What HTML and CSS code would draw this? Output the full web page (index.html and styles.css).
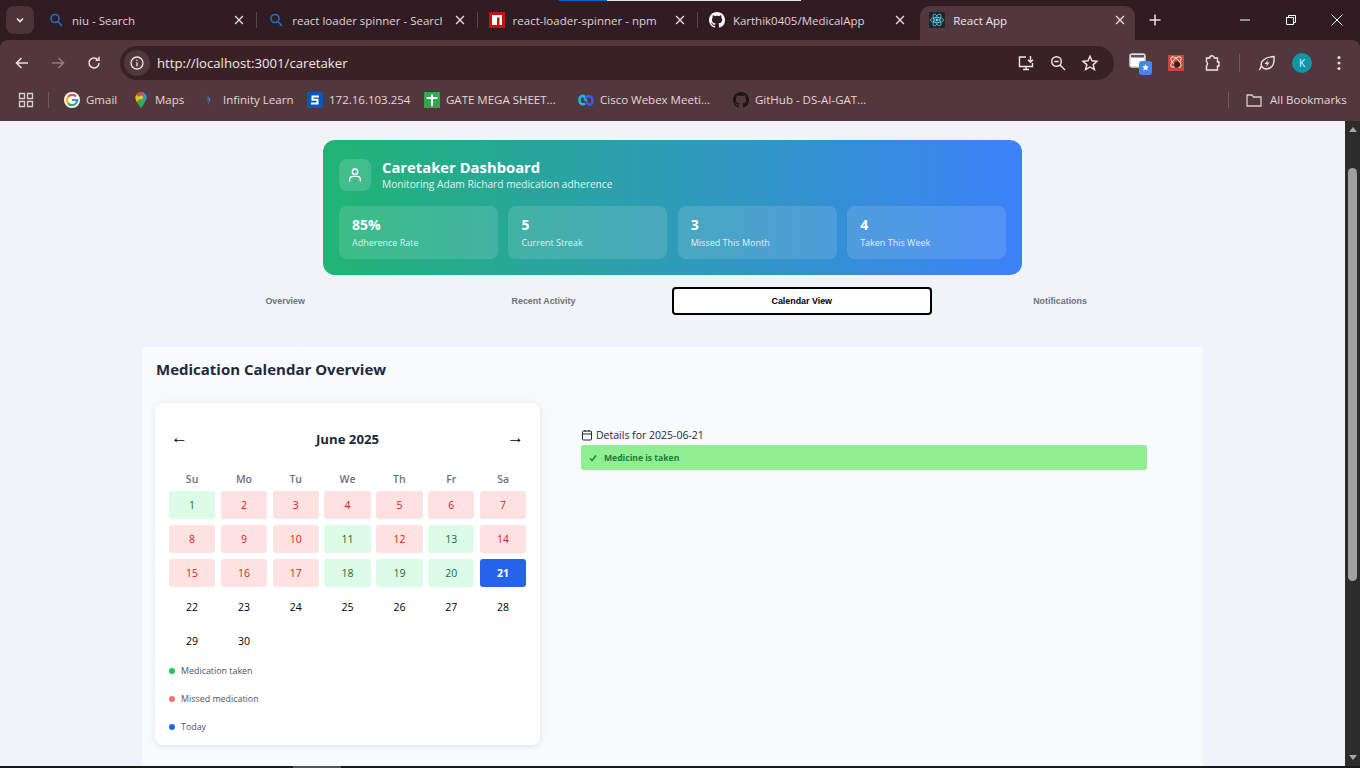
FILE: index.html
```html
<!DOCTYPE html>
<html lang="en">
<head>
    <meta charset="UTF-8">
    <meta name="viewport" content="width=device-width, initial-scale=1.0">
    <title>React App</title>
    <link rel="stylesheet" href="styles.css">
</head>
<body>

    <svg class="defs" width="0" height="0">
        <symbol id="i-close" viewBox="0 0 16 16"><path d="M3.5 3.5l9 9M12.5 3.5l-9 9" fill="none" stroke="currentColor" stroke-width="1.5"/></symbol>
        <symbol id="i-search" viewBox="0 0 16 16"><circle cx="7" cy="6.5" r="4" fill="none" stroke="#1a73c8" stroke-width="1.6"/><path d="M10 9.5l4 4.5" stroke="#1a73c8" stroke-width="1.6"/></symbol>
        <symbol id="i-github" viewBox="0 0 16 16"><path fill="currentColor" d="M8 0C3.58 0 0 3.58 0 8c0 3.54 2.29 6.53 5.47 7.59.4.07.55-.17.55-.38 0-.19-.01-.82-.01-1.49-2.01.37-2.53-.49-2.69-.94-.09-.23-.48-.94-.82-1.13-.28-.15-.68-.52-.01-.53.63-.01 1.08.58 1.23.82.72 1.21 1.87.87 2.33.66.07-.52.28-.87.51-1.07-1.78-.2-3.64-.89-3.64-3.95 0-.87.31-1.59.82-2.15-.08-.2-.36-1.02.08-2.12 0 0 .67-.21 2.2.82.64-.18 1.32-.27 2-.27.68 0 1.36.09 2 .27 1.53-1.04 2.2-.82 2.2-.82.44 1.1.16 1.92.08 2.12.51.56.82 1.27.82 2.15 0 3.07-1.87 3.75-3.65 3.95.29.25.54.73.54 1.48 0 1.07-.01 1.93-.01 2.2 0 .21.15.46.55.38A8.013 8.013 0 0016 8c0-4.42-3.58-8-8-8z"/></symbol>
    </svg>

    <!-- Browser chrome -->
    <div class="chrome">
        <div class="tabstrip">
            <div class="tab-menu"><svg width="12" height="12" viewBox="0 0 12 12"><path d="M3 4.5l3 3 3-3" fill="none" stroke="#f2e8ea" stroke-width="1.6"/></svg></div>
            <div class="tab">
                <svg class="favicon"><use href="#i-search"/></svg>
                <span class="tab-title">niu - Search</span>
                <svg class="tab-close"><use href="#i-close"/></svg>
            </div>
            <div class="tab">
                <svg class="favicon"><use href="#i-search"/></svg>
                <span class="tab-title">react loader spinner - Search</span>
                <svg class="tab-close"><use href="#i-close"/></svg>
            </div>
            <div class="tab">
                <svg class="favicon" viewBox="0 0 16 16"><rect width="16" height="16" fill="#c70f14"/><path d="M3 3h10v10h-2.500V5.500H8V13H3z" fill="#fff"/></svg>
                <span class="tab-title">react-loader-spinner - npm</span>
                <svg class="tab-close"><use href="#i-close"/></svg>
            </div>
            <div class="tab tab-last">
                <svg class="favicon favicon-white"><use href="#i-github"/></svg>
                <span class="tab-title">Karthik0405/MedicalApp</span>
                <svg class="tab-close"><use href="#i-close"/></svg>
            </div>
            <div class="tab tab-active">
                <svg class="favicon" viewBox="0 0 16 16">
                    <rect width="16" height="16" rx="1" fill="#20262b"/>
                    <circle cx="8" cy="8" r="1.400" fill="#61dafb"/>
                    <g fill="none" stroke="#61dafb" stroke-width=".7">
                        <ellipse cx="8" cy="8" rx="6.600" ry="2.600"/>
                        <ellipse cx="8" cy="8" rx="6.600" ry="2.600" transform="rotate(60 8 8)"/>
                        <ellipse cx="8" cy="8" rx="6.600" ry="2.600" transform="rotate(120 8 8)"/>
                    </g>
                </svg>
                <span class="tab-title">React App</span>
                <svg class="tab-close"><use href="#i-close"/></svg>
            </div>
            <svg class="new-tab" width="16" height="16" viewBox="0 0 16 16"><path d="M8 2.500v11M2.500 8h11" stroke="#e8dde0" stroke-width="1.600"/></svg>
            <div class="win-buttons">
                <svg width="16" height="16" viewBox="0 0 16 16"><path d="M3 8h10" stroke="#fff" stroke-width="1"/></svg>
                <svg width="16" height="16" viewBox="0 0 16 16"><path d="M3.500 5.500h7v7h-7zM5.500 5.500v-2h7v7h-2" fill="none" stroke="#fff" stroke-width="1"/></svg>
                <svg width="16" height="16" viewBox="0 0 16 16"><path d="M2.500 2.500l11 11M13.500 2.500l-11 11" stroke="#fff" stroke-width="1"/></svg>
            </div>
        </div>

        <div class="toolbar">
            <button class="tool-btn"><svg width="16" height="16" viewBox="0 0 16 16"><path d="M14 8H3M7.500 3L2.500 8l5 5" fill="none" stroke="#e8dde0" stroke-width="1.600"/></svg></button>
            <button class="tool-btn"><svg width="16" height="16" viewBox="0 0 16 16"><path d="M2 8h11M8.500 3l5 5-5 5" fill="none" stroke="#8f7b80" stroke-width="1.600"/></svg></button>
            <button class="tool-btn"><svg width="16" height="16" viewBox="0 0 16 16"><path d="M13 8a5 5 0 1 1-1.500-3.600M13 1.800v3.400H9.600" fill="none" stroke="#e8dde0" stroke-width="1.500"/></svg></button>
            <div class="omnibox">
                <div class="site-info"><svg width="16" height="16" viewBox="0 0 16 16"><circle cx="8" cy="8" r="6" fill="none" stroke="#efe6e8" stroke-width="1.300"/><path d="M8 7.200v4M8 4.700v1.300" stroke="#efe6e8" stroke-width="1.300"/></svg></div>
                <span class="url">http://localhost:3001/caretaker</span>
                <div class="omni-actions">
                    <svg width="18" height="18" viewBox="0 0 18 18"><path d="M9 3H2.500v9.500h13V9M6 15.500h6M9 12.500v3M13.500 2v6M11 5.800l2.500 2.500L16 5.800" fill="none" stroke="#efe6e8" stroke-width="1.400"/></svg>
                    <svg width="18" height="18" viewBox="0 0 18 18"><circle cx="7.500" cy="7.500" r="4.800" fill="none" stroke="#efe6e8" stroke-width="1.400"/><path d="M11 11l5 5M5.300 7.500h4.400" stroke="#efe6e8" stroke-width="1.400"/></svg>
                    <svg width="18" height="18" viewBox="0 0 18 18"><path d="M9 2.200l2 4.600 5 .5-3.800 3.300 1.200 4.900L9 13l-4.400 2.500 1.200-4.900L2 7.300l5-.5z" fill="none" stroke="#efe6e8" stroke-width="1.400"/></svg>
                </div>
            </div>
            <div class="ext-row">
                <div class="ext">
                    <svg width="24" height="24" viewBox="0 0 24 24"><rect x="2" y="3" width="15" height="13" rx="2" fill="#fff" stroke="#d8d8d8" stroke-width="1.500"/><rect x="3" y="4" width="13" height="2.500" fill="#57575b"/><rect x="11" y="10" width="13" height="14" rx="3" fill="#4285f4"/><path d="M17.500 13l1 2.300 2.400.2-1.800 1.600.6 2.400-2.200-1.300-2.200 1.300.6-2.400-1.800-1.600 2.400-.2z" fill="#fff"/></svg>
                </div>
                <div class="ext">
                    <svg width="18" height="18" viewBox="0 0 18 18"><rect x="1" y="1" width="16" height="16" fill="#c9473a"/><g fill="none" stroke="#f5ddd8" stroke-width="1"><ellipse cx="9" cy="8" rx="6.500" ry="2.800" transform="rotate(45 9 8)"/><ellipse cx="9" cy="8" rx="6.500" ry="2.800" transform="rotate(135 9 8)"/></g><circle cx="10" cy="10.500" r="3" fill="#33201f"/></svg>
                </div>
                <div class="ext">
                    <svg width="18" height="18" viewBox="0 0 18 18"><path d="M3.500 4h3.200a2.300 2.300 0 0 1 4.600 0h3.200v4H16v4h-1.500v4H3.500v-4.500a2 2 0 0 0 0-3.500z" fill="none" stroke="#efe6e8" stroke-width="1.400"/></svg>
                </div>
                <div class="tool-sep"></div>
                <div class="ext">
                    <svg width="18" height="18" viewBox="0 0 18 18"><path d="M16 2.500c.5 6-.5 12-7.500 12.500-2 0-4-1-5-3C2 8 6 3 16 2.500zM3.500 12L1.500 16" fill="none" stroke="#efe6e8" stroke-width="1.400"/><path d="M10.500 5.500L6.500 10h2.500l-1 3 3.500-4.500H9z" fill="#efe6e8"/></svg>
                </div>
                <div class="avatar">K</div>
                <svg class="kebab" width="4" height="16" viewBox="0 0 4 16"><circle cx="2" cy="2.500" r="1.500" fill="#e8dde0"/><circle cx="2" cy="8" r="1.500" fill="#e8dde0"/><circle cx="2" cy="13.500" r="1.500" fill="#e8dde0"/></svg>
            </div>
        </div>

        <div class="bookmarks">
            <svg class="apps" width="16" height="16" viewBox="0 0 16 16"><path d="M1.500 1.500h5v5h-5zM9.500 1.500h5v5h-5zM1.500 9.500h5v5h-5zM9.500 9.500h5v5h-5z" fill="none" stroke="#d8cdd0" stroke-width="1.300"/></svg>
            <div class="bm-sep"></div>
            <div class="bm-list">
                <div class="bm">
                    <svg class="favicon" viewBox="0 0 16 16"><circle cx="8" cy="8" r="8" fill="#fff"/><g fill="none" stroke-width="2.200"><path d="M12 4.500A5.200 5.200 0 0 0 4 4.800" stroke="#ea4335"/><path d="M4 4.800a5.200 5.200 0 0 0 0 6.400" stroke="#fbbc05"/><path d="M4 11.200a5.200 5.200 0 0 0 8 .2" stroke="#34a853"/><path d="M12 11.400A5.200 5.200 0 0 0 13.200 8H8" stroke="#4285f4"/></g></svg>
                    <span>Gmail</span>
                </div>
                <div class="bm">
                    <svg class="favicon" viewBox="0 0 16 16"><path d="M8 0a5.500 5.500 0 0 0-5.500 5.500C2.500 9.500 8 16 8 16s5.500-6.500 5.500-10.500A5.500 5.500 0 0 0 8 0z" fill="#34a853"/><path d="M3.200 3l4 3-3.500 4C3 8.500 2.500 7 2.500 5.500 2.500 4.500 2.700 3.700 3.200 3z" fill="#fbbc05"/><path d="M3.200 3A5.500 5.500 0 0 1 8 0c.8 0 1.500.2 2 .4L7 4.500z" fill="#ea4335"/><path d="M10 .4a5.500 5.500 0 0 1 3.500 5c0 .5 0 .9-.2 1.400L8.500 4z" fill="#4285f4"/><circle cx="8" cy="5.500" r="2" fill="#f6c445"/></svg>
                    <span>Maps</span>
                </div>
                <div class="bm">
                    <svg class="favicon" viewBox="0 0 16 16"><path d="M6 3l3.500 4.500L7 13l1-5z" fill="#3f8fd8"/><path d="M6 6l2 2-1.500 2z" fill="#2c6aa5"/></svg>
                    <span>Infinity Learn</span>
                </div>
                <div class="bm">
                    <svg class="favicon" viewBox="0 0 16 16"><rect width="16" height="16" fill="#0b57b8"/><path d="M12 4.500H5.500v3.200h5v3.800H4" fill="none" stroke="#fff" stroke-width="2"/></svg>
                    <span>172.16.103.254</span>
                </div>
                <div class="bm">
                    <svg class="favicon" viewBox="0 0 16 16"><rect width="16" height="16" rx="1" fill="#2fa84f"/><path d="M2.500 6h11M8 2.500V14" stroke="#fff" stroke-width="2"/></svg>
                    <span>GATE MEGA SHEET...</span>
                </div>
                <div class="bm">
                    <svg class="favicon" viewBox="0 0 16 16"><path d="M7 11.500C5 13 2 12.500 1.500 9 1 5.500 3.500 3 5.500 4c1.500.8 2 3 2.500 5" fill="none" stroke="#18b8e8" stroke-width="2.600"/><path d="M8 7c.5-2 1-3 2.500-3 2 0 4 1.500 4 5s-3 4.500-4.500 3C9 11 8.500 10 8 9" fill="none" stroke="#3c5ae8" stroke-width="2.600"/></svg>
                    <span>Cisco Webex Meeti...</span>
                </div>
                <div class="bm">
                    <svg class="favicon favicon-dark"><use href="#i-github"/></svg>
                    <span>GitHub - DS-AI-GAT...</span>
                </div>
            </div>
            <div class="bm-sep"></div>
            <div class="bm bm-all">
                <svg class="favicon" viewBox="0 0 16 16"><path d="M1 3h5l1.500 2H15v9H1z" fill="none" stroke="#d8cdd0" stroke-width="1.300"/></svg>
                <span>All Bookmarks</span>
            </div>
        </div>
    </div>

    <!-- Page -->
    <div class="viewport">
        <div class="page">

            <div class="hero">
                <div class="hero-head">
                    <div class="hero-icon">
                        <svg width="16" height="16" viewBox="0 0 24 24" fill="none" stroke="#fff" stroke-width="2" stroke-linecap="round"><circle cx="12" cy="7" r="4"/><path d="M4 21v-2a5 5 0 0 1 5-5h6a5 5 0 0 1 5 5v2"/></svg>
                    </div>
                    <div>
                        <h1>Caretaker Dashboard</h1>
                        <p>Monitoring Adam Richard medication adherence</p>
                    </div>
                </div>
                <div class="stats">
                    <div class="stat"><strong>85%</strong><span>Adherence Rate</span></div>
                    <div class="stat"><strong>5</strong><span>Current Streak</span></div>
                    <div class="stat"><strong>3</strong><span>Missed This Month</span></div>
                    <div class="stat"><strong>4</strong><span>Taken This Week</span></div>
                </div>
            </div>

            <div class="tabs">
                <div class="tab-link">Overview</div>
                <div class="tab-link">Recent Activity</div>
                <div class="tab-link selected">Calendar View</div>
                <div class="tab-link">Notifications</div>
            </div>

            <div class="panel">
                <h2>Medication Calendar Overview</h2>
                <div class="panel-body">
                    <div class="calendar">
                        <div class="cal-nav">
                            <span class="cal-arrow">←</span>
                            <span class="cal-month">June 2025</span>
                            <span class="cal-arrow">→</span>
                        </div>
                        <div class="weekdays">
                            <span>Su</span><span>Mo</span><span>Tu</span><span>We</span><span>Th</span><span>Fr</span><span>Sa</span>
                        </div>
                        <div class="days">
                            <div class="day taken">1</div>
                            <div class="day missed">2</div>
                            <div class="day missed">3</div>
                            <div class="day missed">4</div>
                            <div class="day missed">5</div>
                            <div class="day missed">6</div>
                            <div class="day missed">7</div>
                            <div class="day missed">8</div>
                            <div class="day missed">9</div>
                            <div class="day missed">10</div>
                            <div class="day taken">11</div>
                            <div class="day missed">12</div>
                            <div class="day taken">13</div>
                            <div class="day missed">14</div>
                            <div class="day missed">15</div>
                            <div class="day missed">16</div>
                            <div class="day missed">17</div>
                            <div class="day taken">18</div>
                            <div class="day taken">19</div>
                            <div class="day taken">20</div>
                            <div class="day today">21</div>
                            <div class="day">22</div>
                            <div class="day">23</div>
                            <div class="day">24</div>
                            <div class="day">25</div>
                            <div class="day">26</div>
                            <div class="day">27</div>
                            <div class="day">28</div>
                            <div class="day">29</div>
                            <div class="day">30</div>
                        </div>
                        <div class="legend">
                            <div class="legend-item"><i class="dot dot-green"></i>Medication taken</div>
                            <div class="legend-item"><i class="dot dot-red"></i>Missed medication</div>
                            <div class="legend-item"><i class="dot dot-blue"></i>Today</div>
                        </div>
                    </div>

                    <div class="details">
                        <div class="details-title">
                            <svg width="12" height="12" viewBox="0 0 24 24" fill="none" stroke="#1e293b" stroke-width="2"><rect x="3" y="4" width="18" height="18" rx="2"/><path d="M16 2v4M8 2v4M3 10h18"/></svg>
                            Details for 2025-06-21
                        </div>
                        <div class="alert">
                            <svg width="8" height="8" viewBox="0 0 8 8"><path d="M1 4.500l2 2 4-5" fill="none" stroke="#15803d" stroke-width="1.500"/></svg>
                            Medicine is taken
                        </div>
                    </div>
                </div>
            </div>
        </div>

        <div class="scrollbar">
            <div class="sb-up"></div>
            <div class="sb-thumb"></div>
            <div class="sb-down"></div>
        </div>
    </div>

    <div class="taskbar-edge"><div class="taskbar-active"></div></div>

</body>
</html>
```

FILE: styles.css
```css
* {
    box-sizing: border-box;
}

html, body {
    height: 768px;
    margin: 0;
    overflow: hidden;
}

body {
    display: flex;
    flex-direction: column;
    font-family: "Open Sans", "Noto Sans", sans-serif;
    background: #f0f4f8;
}

.defs {
    display: none;
}

/* Browser chrome */
.chrome {
    flex: 0 0 121px;
    background: #301c22;
    color: #e8dde0;
    font-size: 11.500px;
}

.tabstrip {
    display: flex;
    height: 40px;
    padding-left: 6px;
    padding-top: 6px;
    position: relative;
}

.tabstrip::before {
    content: "";
    position: absolute;
    left: 559px;
    top: 0;
    width: 242px;
    height: 1px;
    background: linear-gradient(to right, #0b63c4 20%, #e8e8e8 20%);
}

.tab-menu {
    display: flex;
    align-items: center;
    justify-content: center;
    width: 28px;
    height: 28px;
    border-radius: 8px;
    background: #4b3339;
    margin-right: 3px;
}

.tab {
    display: flex;
    align-items: center;
    width: 220.300px;
    height: 28px;
    padding-left: 11px;
    color: #dfd3d6;
}

.tab::after {
    content: "";
    flex: 0 0 1px;
    height: 16px;
    margin-left: 10px;
    background: #5a454a;
}

.tab-last::after,
.tab-active::after {
    background: none;
}

.tab-active {
    width: 215px;
    height: 34px;
    margin-left: 2px;
    padding-left: 9px;
    padding-bottom: 6px;
    border-radius: 10px 10px 0 0;
    background: #52373c;
    color: #f2e8ea;
}

.tab-active::after {
    margin-left: 0;
    flex-basis: 8px;
}

.favicon {
    flex: 0 0 16px;
    width: 16px;
    height: 16px;
}

.favicon-white {
    color: #fff;
}

.favicon-dark {
    color: #17181a;
}

.tab-title {
    flex: 1;
    margin-left: 8px;
    overflow: hidden;
    white-space: nowrap;
}

.tab-close {
    flex: 0 0 14px;
    width: 14px;
    height: 14px;
    margin-left: 11px;
    color: #e8dde0;
}

.new-tab {
    margin: 6px 0 0 12px;
}

.win-buttons {
    display: flex;
    margin-left: auto;
    padding-right: 15px;
    gap: 30px;
    padding-top: 6px;
}

.toolbar {
    display: flex;
    align-items: center;
    height: 46px;
    padding-left: 4px;
    background: #52373c;
    border-radius: 8px 8px 0 0;
}

.tool-btn {
    display: flex;
    align-items: center;
    justify-content: center;
    width: 36px;
    height: 36px;
    padding: 0;
    border: none;
    background: none;
}

.omnibox {
    display: flex;
    align-items: center;
    width: 994px;
    height: 34px;
    margin-left: 8px;
    padding-left: 4px;
    border-radius: 17px;
    background: #3a2126;
    font-size: 13.200px;
    color: #f2e8ea;
}

.site-info {
    display: flex;
    align-items: center;
    justify-content: center;
    width: 26px;
    height: 26px;
    border-radius: 50%;
    background: #52373c;
}

.url {
    margin-left: 7px;
}

.omni-actions {
    display: flex;
    gap: 14px;
    margin-left: auto;
    padding-right: 15px;
}

.ext-row {
    display: flex;
    align-items: center;
    margin-left: 8px;
}

.ext {
    display: flex;
    align-items: center;
    justify-content: center;
    width: 36px;
    height: 36px;
}

.tool-sep {
    width: 1px;
    height: 18px;
    margin: 0 9px;
    background: #6f5a5f;
}

.avatar {
    display: flex;
    align-items: center;
    justify-content: center;
    width: 20px;
    height: 20px;
    margin-left: 7px;
    border-radius: 50%;
    background: #0e96a8;
    color: #f2f2f2;
    font-size: 10px;
}

.kebab {
    margin-left: 25px;
}

.bookmarks {
    display: flex;
    align-items: center;
    height: 35px;
    padding: 0 0 8px 18px;
    background: #52373c;
}

.bm-sep {
    width: 1px;
    height: 16px;
    margin-left: 14px;
    background: #6f5a5f;
}

.bm-list {
    display: grid;
    grid-template-columns: 69px 68px 106px 117px 154px 155px 481px;
    margin-left: 15px;
}

.bm {
    display: flex;
    align-items: center;
    gap: 6px;
    white-space: nowrap;
    color: #e3d8da;
}

.bm-all {
    margin-left: 17px;
    gap: 8px;
}

/* Page */
.viewport {
    flex: 1;
    display: flex;
    min-height: 0;
}

.page {
    flex: 1;
    overflow: hidden;
    padding-top: 19px;
}

.hero {
    width: 699px;
    height: 135px;
    margin: 0 auto;
    padding: 18px 16px;
    border-radius: 12px;
    background: linear-gradient(to right, #20b573, #3b82f9);
    color: #fff;
}

.hero-head {
    display: flex;
    align-items: center;
    gap: 11px;
}

.hero-icon {
    display: flex;
    align-items: center;
    justify-content: center;
    width: 32px;
    height: 32px;
    border-radius: 8px;
    background: rgba(255, 255, 255, 0.15);
}

.hero h1 {
    margin: -1px 0 0;
    font-size: 14.800px;
    line-height: 20px;
    font-weight: 700;
}

.hero p {
    margin: 0;
    font-size: 10.200px;
    line-height: 14px;
    color: #e3f5ee;
}

.stats {
    display: grid;
    grid-template-columns: repeat(4, 1fr);
    gap: 10.500px;
    margin-top: 15px;
}

.stat {
    display: flex;
    flex-direction: column;
    height: 53px;
    padding: 10px 13px;
    border-radius: 8px;
    background: rgba(255, 255, 255, 0.13);
}

.stat strong {
    font-size: 14px;
    line-height: 18px;
}

.stat span {
    margin-top: 2px;
    font-size: 9px;
    line-height: 13px;
    color: #e3f0f2;
}

.tabs {
    display: grid;
    grid-template-columns: repeat(4, 258.300px);
    width: 1033px;
    margin: 12px auto 0;
}

.tab-link {
    height: 28px;
    line-height: 28px;
    text-align: center;
    font-family: "Liberation Sans", sans-serif;
    font-size: 8.900px;
    font-weight: 700;
    color: #6b7280;
}

.tab-link.selected {
    line-height: 24px;
    margin: 0 -1px;
    border: 2px solid #000;
    border-radius: 4px;
    background: #fff;
    color: #000;
}

.panel {
    width: 1061px;
    height: 500px;
    margin: 32px auto 0;
    padding: 12px 13px;
    background: #f8fafc;
}

.panel h2 {
    margin: 0 0 0 1px;
    font-size: 15px;
    line-height: 20px;
    font-weight: 700;
    color: #1e293b;
}

.panel-body {
    display: flex;
    align-items: flex-start;
    gap: 41px;
    margin-top: 24px;
}

.calendar {
    width: 385px;
    height: 342px;
    padding: 14px;
    border-radius: 8px;
    background: #fff;
    box-shadow: 0 1px 6px rgba(0, 0, 0, 0.1);
}

.cal-nav {
    display: flex;
    align-items: center;
    justify-content: space-between;
    height: 42px;
    padding: 0 2px;
}

.cal-arrow {
    font-family: "Liberation Sans", sans-serif;
    font-size: 17px;
    color: #000;
}

.cal-month {
    padding-top: 1px;
    font-size: 13.200px;
    font-weight: 700;
    color: #1e293b;
}

.weekdays {
    display: grid;
    grid-template-columns: repeat(7, 46.200px);
    gap: 5.650px;
    margin-top: 12px;
    height: 16px;
    font-size: 10.500px;
    font-weight: 600;
    line-height: 16px;
    text-align: center;
    color: #6b7280;
}

.days {
    display: grid;
    grid-template-columns: repeat(7, 46.200px);
    grid-auto-rows: 28px;
    gap: 5.900px 5.650px;
    margin-top: 4px;
}

.day {
    display: flex;
    align-items: center;
    justify-content: center;
    border-radius: 3px;
    font-size: 10.500px;
    color: #000;
}

.taken {
    background: #dcfce7;
    color: #116e35;
}

.missed {
    background: #fee2e2;
    color: #d91c1c;
}

.today {
    background: #2563eb;
    color: #fff;
    font-weight: 700;
}

.legend {
    display: flex;
    flex-direction: column;
    gap: 14px;
    margin-top: 9px;
}

.legend-item {
    display: flex;
    align-items: center;
    gap: 6px;
    height: 14px;
    font-size: 8.900px;
    color: #4b5563;
}

.dot {
    width: 6px;
    height: 6px;
    border-radius: 50%;
}

.dot-green { background: #22c55e; }
.dot-red { background: #f87171; }
.dot-blue { background: #2563eb; }

.details {
    width: 566px;
    margin-top: 24px;
}

.details-title {
    display: flex;
    align-items: center;
    gap: 3px;
    height: 18px;
    padding-bottom: 2px;
    font-size: 10.500px;
    color: #1e293b;
}

.alert {
    display: flex;
    align-items: center;
    gap: 7px;
    height: 25px;
    padding-left: 8px;
    border-radius: 3px;
    background: #90ee90;
    font-size: 8.600px;
    font-weight: 700;
    color: #15803d;
}

/* Scrollbar */
.scrollbar {
    display: flex;
    flex-direction: column;
    align-items: center;
    flex: 0 0 15px;
    background: #2c2c2c;
}

.sb-up {
    margin-top: 6px;
    border: 4.500px solid transparent;
    border-top: none;
    border-bottom: 5px solid #a8a8a8;
}

.sb-thumb {
    width: 9px;
    height: 413px;
    margin-top: 36px;
    border-radius: 5px;
    background: #a0a0a0;
}

.sb-down {
    margin-top: auto;
    margin-bottom: 6px;
    border: 4.500px solid transparent;
    border-bottom: none;
    border-top: 5px solid #a8a8a8;
}

.taskbar-edge {
    flex: 0 0 2px;
    padding-left: 293px;
    background: #1a1a1a;
}

.taskbar-active {
    width: 48px;
    height: 2px;
    background: #555;
}
```
